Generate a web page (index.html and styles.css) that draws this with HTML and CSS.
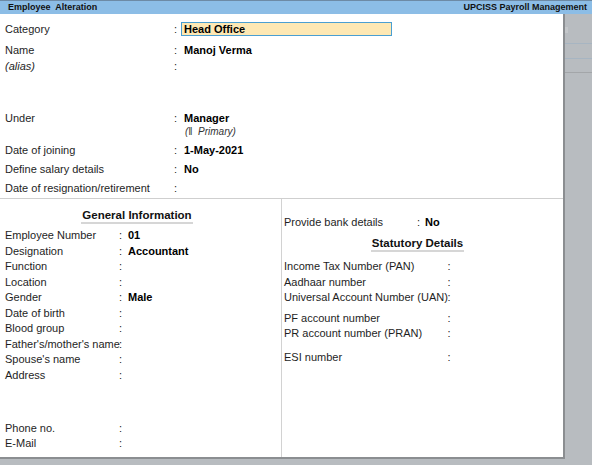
FILE: index.html
```html
<!DOCTYPE html>
<html>
<head>
<meta charset="utf-8">
<title>Employee Alteration</title>
<link rel="stylesheet" href="styles.css">
</head>
<body>
<div class="header">
  <span class="h-title">Employee&nbsp; Alteration</span>
  <span class="h-app">UPCISS Payroll Management</span>
</div>
<div class="main">
  <div class="panel">
    <div class="upper">
      <div class="row"><span class="lbl">Category</span><span class="col">:</span><span class="val boxed"><span class="input">Head Office</span></span></div>
      <div class="row gap5"><span class="lbl">Name</span><span class="col">:</span><span class="val">Manoj Verma</span></div>
      <div class="row"><span class="lbl alias">(alias)</span><span class="col">:</span><span class="val"></span></div>
      <div class="row gap36"><span class="lbl">Under</span><span class="col">:</span><span class="val">Manager</span></div>
      <div class="row sub"><span class="lbl"></span><span class="col"></span><span class="val-sub">(ǁ&nbsp; Primary)</span></div>
      <div class="row gap5"><span class="lbl">Date of joining</span><span class="col">:</span><span class="val">1-May-2021</span></div>
      <div class="row gap3"><span class="lbl">Define salary details</span><span class="col">:</span><span class="val">No</span></div>
      <div class="row gap3"><span class="lbl">Date of resignation/retirement</span><span class="col">:</span><span class="val"></span></div>
    </div>
    <div class="lower">
      <div class="left">
        <div class="gtitle"><span>General Information</span></div>
        <div class="frows">
          <div class="frow"><span>Employee Number</span><span class="c">:</span><span class="v">01</span></div>
          <div class="frow"><span>Designation</span><span class="c">:</span><span class="v">Accountant</span></div>
          <div class="frow"><span>Function</span><span class="c">:</span><span class="v"></span></div>
          <div class="frow"><span>Location</span><span class="c">:</span><span class="v"></span></div>
          <div class="frow"><span>Gender</span><span class="c">:</span><span class="v">Male</span></div>
          <div class="frow"><span>Date of birth</span><span class="c">:</span><span class="v"></span></div>
          <div class="frow"><span>Blood group</span><span class="c">:</span><span class="v"></span></div>
          <div class="frow"><span>Father's/mother's name</span><span class="c">:</span><span class="v"></span></div>
          <div class="frow"><span>Spouse's name</span><span class="c">:</span><span class="v"></span></div>
          <div class="frow"><span>Address</span><span class="c">:</span><span class="v"></span></div>
          <div class="frow phone"><span>Phone no.</span><span class="c">:</span><span class="v"></span></div>
          <div class="frow"><span>E-Mail</span><span class="c">:</span><span class="v"></span></div>
        </div>
      </div>
      <div class="right">
        <div class="bank"><span>Provide bank details</span><span class="c">:</span><span class="v">No</span></div>
        <div class="stitle"><span>Statutory Details</span></div>
        <div class="srows">
          <div class="srow"><span>Income Tax Number (PAN)</span><span class="c">:</span><span></span></div>
          <div class="srow"><span>Aadhaar number</span><span class="c">:</span><span></span></div>
          <div class="srow"><span>Universal Account Number (UAN)</span><span class="c">:</span><span></span></div>
          <div class="srow gap5"><span>PF account number</span><span class="c">:</span><span></span></div>
          <div class="srow"><span>PR account number (PRAN)</span><span class="c">:</span><span></span></div>
          <div class="srow gap8"><span>ESI number</span><span class="c">:</span><span></span></div>
        </div>
      </div>
    </div>
  </div>
  <div class="strip">
    <div class="s1"><span class="notch"></span></div>
    <div class="s2"></div>
    <div class="s3"></div>
  </div>
</div>
</body>
</html>
```
FILE: styles.css
```css
html, body {
  margin: 0;
  padding: 0;
}
body {
  width: 592px;
  height: 465px;
  overflow: hidden;
  background: #b8bcc0;
  font-family: "Liberation Sans", Arial, sans-serif;
  font-size: 11px;
  color: #1e1e1e;
}
.header {
  height: 13px;
  border-top: 1px solid #6d8aa5;
  background: #8cbde6;
  display: flex;
  justify-content: space-between;
  align-items: center;
  padding: 0 5px 0 8px;
  font-size: 9px;
  font-weight: bold;
  color: #111;
  line-height: 13px;
}
.main {
  display: flex;
  height: 451px;
}
.panel {
  width: 563px;
  height: 443px;
  background: #fff;
  border-right: 2px solid #8b8e91;
  border-bottom: 2px solid #8b8e91;
  display: flex;
  flex-direction: column;
}
.upper {
  padding: 7px 0 2px 5px;
  border-bottom: 1px solid #cfcfcf;
  display: flex;
  flex-direction: column;
}
.row {
  display: grid;
  grid-template-columns: 169px 7px 1fr;
  height: 16px;
  line-height: 16px;
  white-space: nowrap;
}
.row.sub {
  height: 11px;
  line-height: 11px;
}
.gap3 { margin-top: 3px; }
.gap5 { margin-top: 5px; }
.gap8 { margin-top: 8px; }
.gap36 { margin-top: 36px; }
.alias {
  font-style: italic;
}
.val {
  padding-left: 3px;
  font-weight: bold;
  color: #000;
}
.val.boxed {
  padding-left: 0;
  display: flex;
  align-items: center;
}
.input {
  box-sizing: border-box;
  width: 211px;
  height: 14px;
  line-height: 12px;
  padding-left: 2px;
  border: 1px solid #4a9fd2;
  background: #fde8b4;
}
.val-sub {
  padding-left: 4px;
  font-size: 10px;
  font-style: italic;
  color: #333;
}
.lower {
  flex: 1;
  display: flex;
}
.left {
  width: 281px;
  border-right: 1px solid #d2d2d2;
  padding-top: 9px;
}
.gtitle, .stitle {
  display: flex;
  justify-content: center;
  font-weight: bold;
  font-size: 11.5px;
  color: #111;
}
.gtitle {
  padding-right: 7px;
}
.gtitle span, .stitle span {
  line-height: 14px;
  border-bottom: 2px solid #d6d6d6;
  padding: 0 1px;
}
.frows {
  margin-top: 4px;
  padding-left: 5px;
}
.frow {
  display: grid;
  grid-template-columns: 114px 9px 1fr;
  line-height: 15.5px;
  white-space: nowrap;
}
.frow .v, .bank .v {
  font-weight: bold;
  color: #000;
}
.frow.phone {
  margin-top: 37.5px;
}
.right {
  flex: 1;
  padding: 15px 0 0 2px;
}
.bank {
  display: grid;
  grid-template-columns: 133px 8px auto;
  line-height: 16px;
  white-space: nowrap;
}
.stitle {
  width: 267px;
  margin-top: 6px;
}
.srows {
  margin-top: 7px;
}
.srow {
  display: grid;
  grid-template-columns: 163.5px 10px 1fr;
  line-height: 15.5px;
  white-space: nowrap;
}
.strip {
  flex: 1;
  display: flex;
  flex-direction: column;
}
.s1 {
  height: 29px;
  border-bottom: 1px solid #a7b5c2;
  position: relative;
}
.notch {
  position: absolute;
  left: 0;
  top: 13px;
  width: 3px;
  height: 6px;
  background: #c4c7ca;
}
.s2 {
  height: 14px;
  border-bottom: 1px solid #a7b5c2;
}
.s3 {
  height: 13px;
  border-bottom: 1px solid #a3a6a9;
}
```
